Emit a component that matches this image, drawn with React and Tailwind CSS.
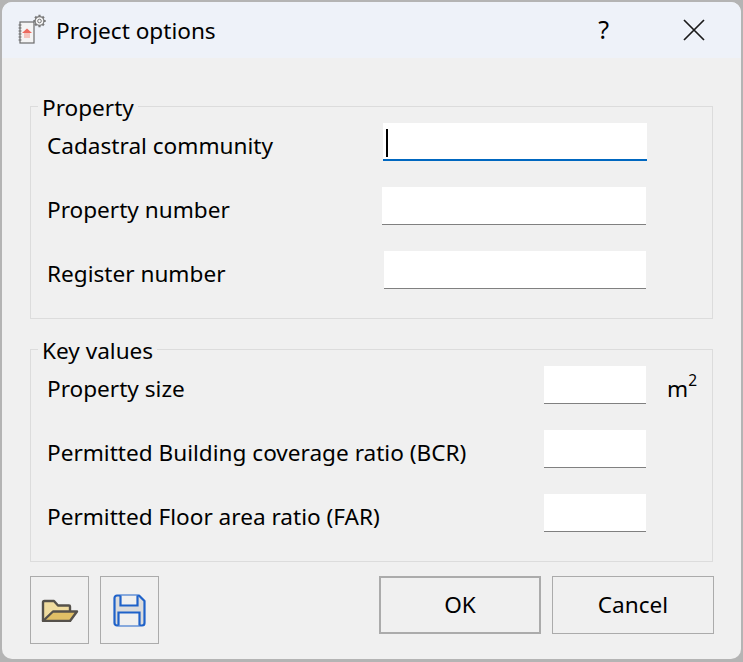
const FieldRow = ({ label, inputClass = "w-[262px]", unit, active }) => (
  <div className="flex items-center h-[38px] text-[22.6px] text-black">
    <span className="flex-1 pl-[16px] pt-[8px] leading-none">{label}</span>
    <div className={`relative h-[38px] bg-white ${active ? "border-b-2 border-[#0067c0]" : "border-b border-[#808080]"} ${inputClass}`}>
      {active && <span className="absolute left-[3px] top-[6px] h-[28px] w-[1.5px] bg-black" />}
    </div>
    <span className="w-[66px] pl-[21px] pt-[8px] leading-none">{unit}</span>
  </div>
);

const GroupBox = ({ title, children, className }) => (
  <div className={`relative border border-[#dcdcdc] pt-[16px] ${className}`}>
    <span className="absolute left-[7px] top-[-13px] bg-[#f0f0f0] px-[4px] text-[22.6px] leading-[27px] text-black">{title}</span>
    <div className="flex flex-col gap-[26px]">{children}</div>
  </div>
);

const OpenIcon = () => (
  <svg width="38" height="24" viewBox="0 -1 38 24" fill="none">
    <path d="M2 22V3.500A1.500 1.500 0 0 1 3.500 2H13l4 4.500h11a1 1 0 0 1 1 1V13" fill="#f0dc9f" stroke="#55514b" strokeWidth="2.400" strokeLinejoin="round" />
    <path d="M2 22 12 12.500h24L29 22z" fill="#e0bf66" stroke="#55514b" strokeWidth="2.400" strokeLinejoin="round" />
  </svg>
);

const SaveIcon = () => (
  <svg width="33" height="33" viewBox="0 0 33 33" fill="none">
    <path d="M4 1.500h22l5.500 5.500v22a2.500 2.500 0 0 1-2.500 2.500H4A2.500 2.500 0 0 1 1.500 29V4A2.500 2.500 0 0 1 4 1.500z" fill="#dcdcdc" stroke="#1f62c9" strokeWidth="2.200" strokeLinejoin="round" />
    <path d="M7.500 1.500v10h17v-10" fill="#f0f0f0" stroke="#1f62c9" strokeWidth="2.200" />
    <path d="M5.500 31.500V18.500h21v13" fill="#f0f0f0" stroke="#1f62c9" strokeWidth="2.200" />
  </svg>
);

const AppIcon = () => (
  <svg width="30" height="32" viewBox="0 0 30 32" fill="none">
    <rect x="2" y="8" width="14" height="21" fill="#f4f4f4" stroke="#6b6b6b" strokeWidth="1.200" />
    <path d="M0.500 11h3M0.500 14h3M0.500 17h3M0.500 20h3M0.500 23h3M0.500 26h3" stroke="#6b6b6b" strokeWidth="1" />
    <rect x="6" y="18" width="6" height="6" fill="#f4c4bd" />
    <path d="M4 19 9 14.500 14 19z" fill="#ec6a5e" />
    {[0, 45, 90, 135].map((r) => (
      <path key={r} d="M21.500 0.800V13.200" stroke="#7a7a7a" strokeWidth="2.200" transform={`rotate(${r} 21.500 7)`} />
    ))}
    <circle cx="21.500" cy="7" r="4.400" fill="#f4f4f4" stroke="#7a7a7a" strokeWidth="1.200" />
    <circle cx="21.500" cy="7" r="1.800" fill="#f4f4f4" stroke="#7a7a7a" strokeWidth="1" />
  </svg>
);

export default function App() {
  return (
    <div
      className="h-[662px] w-[743px] overflow-hidden bg-[#b4b4b4] pl-[2px] pr-[2px] pt-[2px] pb-[3px]"
      style={{ fontFamily: '"Noto Sans", "Open Sans", sans-serif' }}
    >
      <div className="flex h-full flex-col overflow-hidden rounded-[10px] bg-[#f0f0f0]">
        <div className="flex h-[56px] shrink-0 items-center bg-[#eef2f9] pl-[16px]">
          <AppIcon />
          <span className="ml-[8px] flex-1 pt-[2px] text-[22.6px] text-black">Project options</span>
          <span className="mr-[74px] text-[25px] text-black">?</span>
          <svg className="mr-[36px]" width="22" height="22" viewBox="0 0 22 22" fill="none">
            <path d="M1 1l20 20M21 1 1 21" stroke="#1a1a1a" strokeWidth="1.700" />
          </svg>
        </div>

        <div className="flex flex-1 flex-col pl-[28px] pr-[28px] pt-[48px]">
          <GroupBox title="Property" className="h-[213px]">
            <FieldRow label="Cadastral community" inputClass="mr-[-1px] w-[264px]" active />
            <FieldRow label="Property number" inputClass="w-[264px]" />
            <FieldRow label="Register number" />
          </GroupBox>

          <GroupBox title="Key values" className="mt-[30px] h-[213px]">
            <FieldRow
              label="Property size"
              inputClass="w-[102px]"
              unit={<span className="relative">m<span className="absolute left-full top-[0px] text-[15.5px] leading-none">2</span></span>}
            />
            <FieldRow label="Permitted Building coverage ratio (BCR)" inputClass="w-[102px]" />
            <FieldRow label="Permitted Floor area ratio (FAR)" inputClass="w-[102px]" />
          </GroupBox>

          <div className="mr-[-1px] mt-[14px] flex items-start">
            <button className="flex h-[68px] w-[59px] items-center justify-center border border-[#ababab]">
              <OpenIcon />
            </button>
            <button className="ml-[11px] flex h-[68px] w-[59px] items-center justify-center border border-[#ababab]">
              <SaveIcon />
            </button>
            <button className="ml-auto h-[58px] w-[162px] border-2 border-[#ababab] text-[22.6px] text-black">OK</button>
            <button className="ml-[11px] h-[58px] w-[162px] border border-[#ababab] text-[22.6px] text-black">Cancel</button>
          </div>
        </div>
      </div>
    </div>
  );
}
